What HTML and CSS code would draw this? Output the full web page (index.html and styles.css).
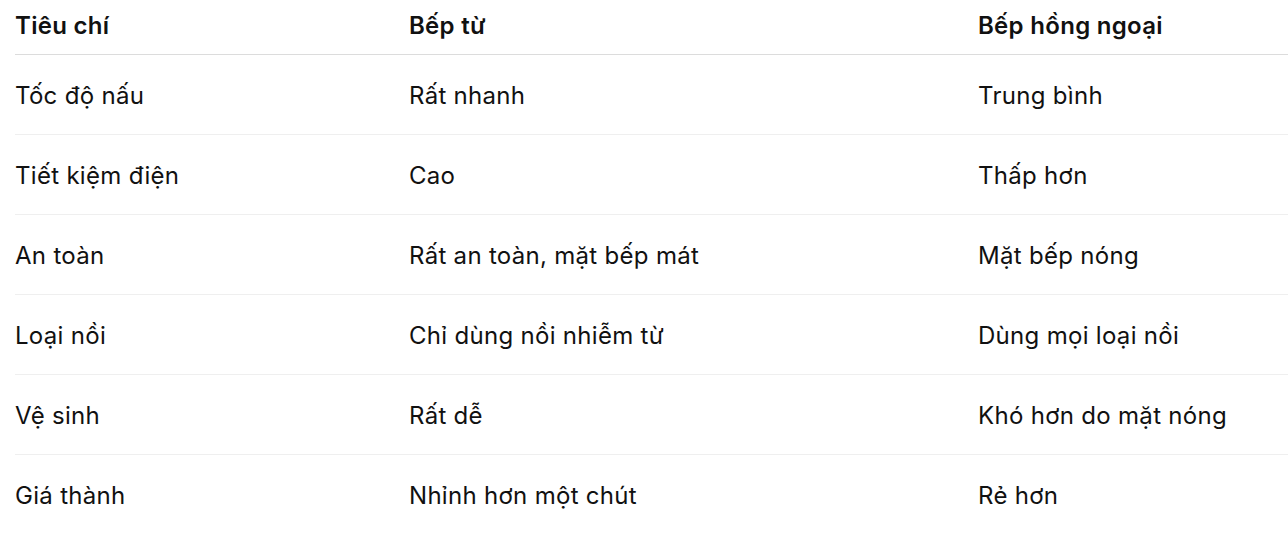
FILE: index.html
```html
<!DOCTYPE html>
<html lang="vi">
<head>
<meta charset="utf-8">
<link rel="stylesheet" href="styles.css">
</head>
<body>
<div class="wrap">
<table class="cmp">
  <colgroup><col class="c1"><col class="c2"><col class="c3"></colgroup>
  <thead>
    <tr><th>Tiêu chí</th><th>Bếp từ</th><th>Bếp hồng ngoại</th></tr>
  </thead>
  <tbody>
    <tr><td>Tốc độ nấu</td><td>Rất nhanh</td><td>Trung bình</td></tr>
    <tr><td>Tiết kiệm điện</td><td>Cao</td><td>Thấp hơn</td></tr>
    <tr><td>An toàn</td><td>Rất an toàn, mặt bếp mát</td><td>Mặt bếp nóng</td></tr>
    <tr><td>Loại nồi</td><td>Chỉ dùng nồi nhiễm từ</td><td>Dùng mọi loại nồi</td></tr>
    <tr><td>Vệ sinh</td><td>Rất dễ</td><td>Khó hơn do mặt nóng</td></tr>
    <tr><td>Giá thành</td><td>Nhỉnh hơn một chút</td><td>Rẻ hơn</td></tr>
  </tbody>
</table>
</div>
</body>
</html>
```
FILE: styles.css
```css
html, body {
  margin: 0;
  padding: 0;
  background: #ffffff;
}
.wrap {
  padding-left: 15px;
  overflow: hidden;
}
.cmp {
  width: 1273px;
  border-collapse: collapse;
  table-layout: fixed;
  font-family: Inter, "Noto Sans", sans-serif;
  font-size: 24px;
  letter-spacing: 0.3px;
  color: #111111;
}
.c1 { width: 394px; }
.c2 { width: 569px; }
.cmp th {
  text-align: left;
  font-weight: 600;
  height: 54px;
  padding: 2px 0 4px 0;
  vertical-align: middle;
  line-height: 30px;
  border-bottom: 1px solid #dcdcdc;
  box-sizing: border-box;
}
.cmp td {
  height: 80px;
  padding: 3px 0 0 0;
  line-height: 30px;
  vertical-align: middle;
  border-bottom: 1px solid #efefef;
  box-sizing: border-box;
}
.cmp tbody tr:last-child td {
  border-bottom: none;
}
```
